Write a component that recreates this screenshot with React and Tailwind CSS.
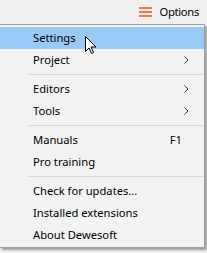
import React from 'react';

const Row = ({ label, right, active }) => (
  <div
    className={`flex items-center h-[22px] pl-[33px] pr-[14px] ${active ? 'bg-[#99c9f5]' : ''}`}
  >
    <span className="flex-1">{label}</span>
    {right === 'sub' && (
      <svg width="5" height="8" viewBox="0 0 5 8" className="mr-[1px]">
        <path d="M0.5 0.5 L4 4 L0.5 7.5" fill="none" stroke="#333" strokeWidth="1" />
      </svg>
    )}
    {right && right !== 'sub' && <span className="mr-[8px]">{right}</span>}
  </div>
);

const Sep = () => (
  <div className="py-[3px] pl-[29px]">
    <div className="h-px bg-[#d7d7d7]" />
  </div>
);

export default function App() {
  return (
    <div
      className="w-[207px] h-[253px] bg-[#f0f0f0] text-[11.2px] text-black overflow-hidden relative"
      style={{ fontFamily: '"Segoe UI", "Noto Sans", sans-serif' }}
    >
      <div className="h-[24px] flex items-center justify-end pr-[8px] gap-[8px]">
        <svg width="13" height="10" viewBox="0 0 13 10">
          <rect x="0" y="0" width="13" height="2" fill="#f07c3e" />
          <rect x="0" y="4" width="13" height="2" fill="#f07c3e" />
          <rect x="0" y="8" width="13" height="2" fill="#f07c3e" />
        </svg>
        <span className="tracking-[-0.3px]">Options</span>
      </div>
      <div className="absolute right-[3px] top-[84px] w-[3px] h-[30px] bg-[#555]" />
      <div className="w-[205px] border-r border-b border-t border-[#a0a0a0] bg-[#f2f2f2] pt-[2px] pb-[1px] shadow-[2px_2px_2px_rgba(0,0,0,0.35)] relative">
        <Row label="Settings" active />
        <Row label="Project" right="sub" />
        <Sep />
        <Row label="Editors" right="sub" />
        <Row label="Tools" right="sub" />
        <Sep />
        <Row label="Manuals" right="F1" />
        <Row label="Pro training" />
        <Sep />
        <Row label="Check for updates..." />
        <Row label="Installed extensions" />
        <Row label="About Dewesoft" />
        <svg className="absolute left-[85px] top-[11px]" width="12" height="19" viewBox="0 0 12 19">
          <path d="M0.5 0.5 L0.5 15.5 L4 12 L6.5 17.5 L8.5 16.5 L6 11 L11 11 Z" fill="#fff" stroke="#000" strokeWidth="1" />
        </svg>
      </div>
    </div>
  );
}
